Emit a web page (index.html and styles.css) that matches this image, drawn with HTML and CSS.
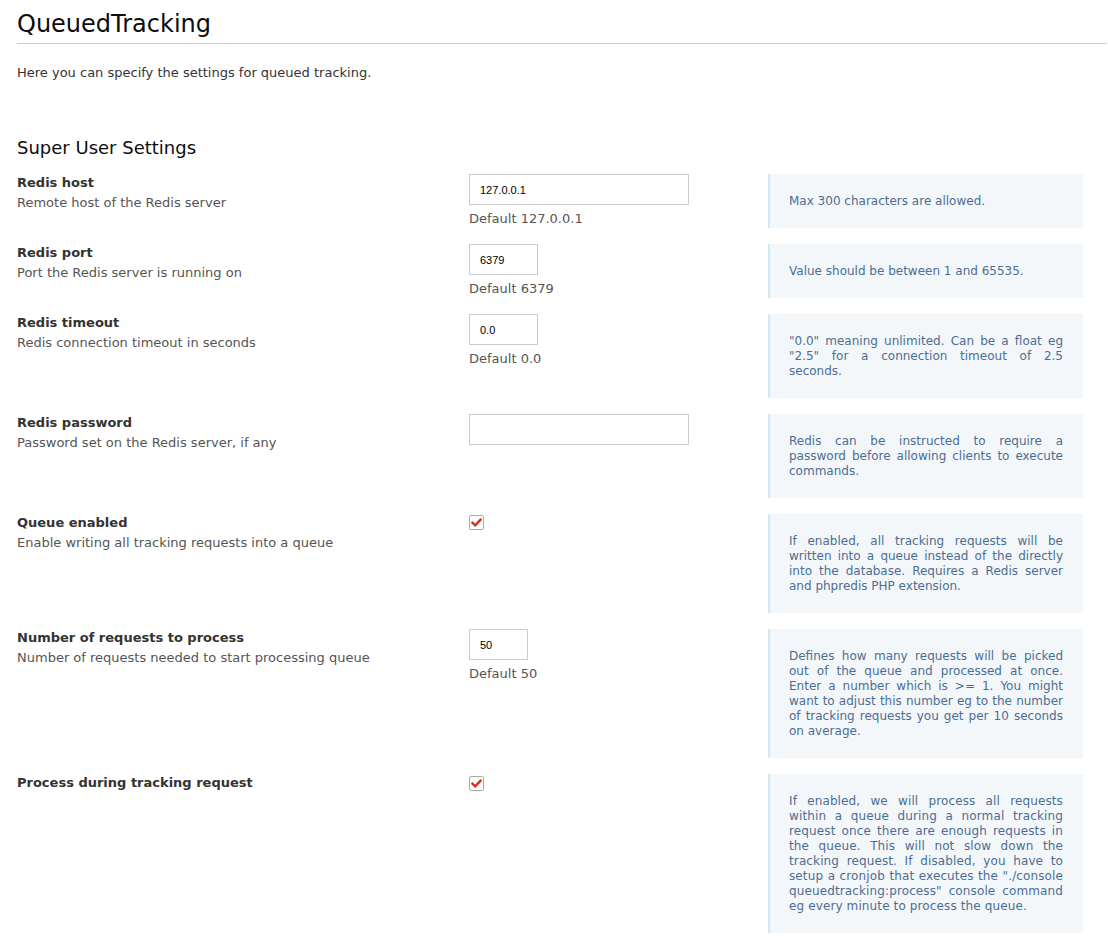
FILE: index.html
```html
<!DOCTYPE html>
<html>
<head>
<meta charset="utf-8">
<link rel="stylesheet" href="styles.css">
</head>
<body>
<div class="page">
  <h1 class="title">QueuedTracking</h1>
  <p class="intro">Here you can specify the settings for queued tracking.</p>
  <h2 class="section">Super User Settings</h2>
  <div class="settings">
    <div class="label-col"><div class="label">Redis host</div><div class="desc">Remote host of the Redis server</div></div>
    <div class="field-col"><input class="text wide" type="text" value="127.0.0.1"><div class="default">Default 127.0.0.1</div></div>
    <div class="help">Max 300 characters are allowed.</div>

    <div class="label-col"><div class="label">Redis port</div><div class="desc">Port the Redis server is running on</div></div>
    <div class="field-col"><input class="text short" type="text" value="6379"><div class="default">Default 6379</div></div>
    <div class="help">Value should be between 1 and 65535.</div>

    <div class="label-col"><div class="label">Redis timeout</div><div class="desc">Redis connection timeout in seconds</div></div>
    <div class="field-col"><input class="text short" type="text" value="0.0"><div class="default">Default 0.0</div></div>
    <div class="help">"0.0" meaning unlimited. Can be a float eg "2.5" for a connection timeout of 2.5 seconds.</div>

    <div class="label-col"><div class="label">Redis password</div><div class="desc">Password set on the Redis server, if any</div></div>
    <div class="field-col"><input class="text wide" type="password" value=""></div>
    <div class="help">Redis can be instructed to require a password before allowing clients to execute commands.</div>

    <div class="label-col"><div class="label">Queue enabled</div><div class="desc">Enable writing all tracking requests into a queue</div></div>
    <div class="field-col"><span class="check"><svg width="13" height="13" viewBox="0 0 13 13"><path d="M2.5 6.8 L5.2 9.3 L10.5 3.8" fill="none" stroke="#d92b1e" stroke-width="2.4" stroke-linecap="square"/></svg></span></div>
    <div class="help">If enabled, all tracking requests will be written into a queue instead of the directly into the database. Requires a Redis server and phpredis PHP extension.</div>

    <div class="label-col"><div class="label">Number of requests to process</div><div class="desc">Number of requests needed to start processing queue</div></div>
    <div class="field-col"><input class="text tiny" type="text" value="50"><div class="default">Default 50</div></div>
    <div class="help">Defines how many requests will be picked out of the queue and processed at once. Enter a number which is &gt;= 1. You might want to adjust this number eg to the number of tracking requests you get per 10 seconds on average.</div>

    <div class="label-col"><div class="label">Process during tracking request</div></div>
    <div class="field-col"><span class="check check-low"><svg width="13" height="13" viewBox="0 0 13 13"><path d="M2.5 6.8 L5.2 9.3 L10.5 3.8" fill="none" stroke="#d92b1e" stroke-width="2.4" stroke-linecap="square"/></svg></span></div>
    <div class="help help-wide">If enabled, we will process all requests within a queue during a normal tracking request once there are enough requests in the queue. This will not slow down the tracking request. If disabled, you have to setup a cronjob that executes the "./console queuedtracking:process" console command eg every minute to process the queue.</div>
  </div>
</div>
</body>
</html>
```

FILE: styles.css
```css
html, body {
  margin: 0;
  padding: 0;
  background: #fff;
}
body {
  font-family: "DejaVu Sans", Verdana, sans-serif;
  color: #333;
}
.page {
  padding-left: 17px;
  padding-right: 1px;
}
.title {
  margin: 0;
  padding: 9px 0 4px;
  font-size: 24px;
  line-height: 30px;
  font-weight: normal;
  color: #0d0d0d;
  border-bottom: 1px solid #cccccc;
}
.intro {
  margin: 21px 0 0;
  font-size: 13px;
  line-height: 16px;
  color: #333;
}
.section {
  margin: 56px 0 0;
  font-size: 18px;
  line-height: 22px;
  font-weight: normal;
  color: #0d0d0d;
}
.settings {
  margin-top: 15px;
  display: grid;
  grid-template-columns: 452px 299px 315px;
  row-gap: 16px;
  align-items: start;
}
.label {
  font-weight: bold;
  font-size: 13px;
  line-height: 16px;
  margin-top: 1px;
  color: #333;
}
.desc {
  margin-top: 4px;
  font-size: 13px;
  line-height: 16px;
  color: #555;
}
.text {
  display: block;
  box-sizing: border-box;
  height: 31px;
  margin: 0;
  padding: 0 10px;
  border: 1px solid #cccccc;
  border-radius: 0;
  font-family: "Liberation Sans", Arial, sans-serif;
  font-size: 11px;
  color: #000;
  background: #fff;
  outline: none;
}
.wide { width: 220px; }
.short { width: 69px; }
.tiny { width: 59px; }
.default {
  margin-top: 6px;
  font-size: 13px;
  line-height: 16px;
  color: #555;
}
.check {
  display: flex;
  align-items: center;
  justify-content: center;
  box-sizing: border-box;
  width: 15px;
  height: 15px;
  margin-top: 1px;
  border: 1px solid #aaaaaa;
  border-radius: 2px;
  background: #fff;
}
.check-low { margin-top: 2px; }
.help {
  box-sizing: border-box;
  padding: 20px 20px 19px 19px;
  border-left: 2px solid #cfe9f4;
  background: #f4f7fa;
  font-size: 12px;
  line-height: 15px;
  color: #4b6e94;
  text-align: justify;
}
.help-wide {
  letter-spacing: 0.12px;
}
```
